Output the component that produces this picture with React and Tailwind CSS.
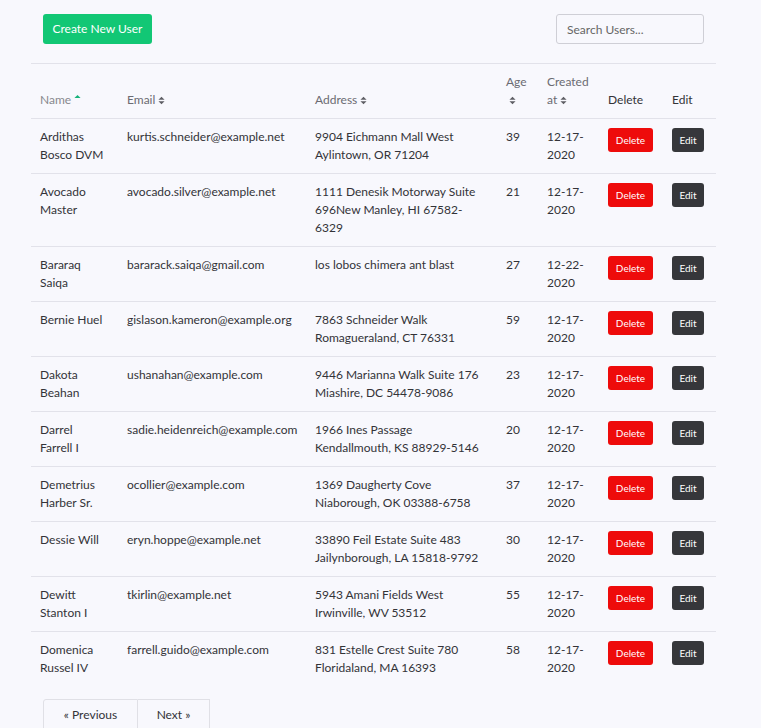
const users = [
  { name: "Ardithas Bosco DVM", email: "kurtis.schneider@example.net", address: "9904 Eichmann Mall West Aylintown, OR 71204", age: 39, created: "12-17-2020" },
  { name: "Avocado Master", email: "avocado.silver@example.net", address: "1111 Denesik Motorway Suite 696New Manley, HI 67582-6329", age: 21, created: "12-17-2020" },
  { name: "Bararaq Saiqa", email: "bararack.saiqa@gmail.com", address: "los lobos chimera ant blast", age: 27, created: "12-22-2020" },
  { name: "Bernie Huel", email: "gislason.kameron@example.org", address: "7863 Schneider Walk Romagueraland, CT 76331", age: 59, created: "12-17-2020" },
  { name: "Dakota Beahan", email: "ushanahan@example.com", address: "9446 Marianna Walk Suite 176 Miashire, DC 54478-9086", age: 23, created: "12-17-2020" },
  { name: "Darrel Farrell I", email: "sadie.heidenreich@example.com", address: "1966 Ines Passage Kendallmouth, KS 88929-5146", age: 20, created: "12-17-2020" },
  { name: "Demetrius Harber Sr.", email: "ocollier@example.com", address: "1369 Daugherty Cove Niaborough, OK 03388-6758", age: 37, created: "12-17-2020" },
  { name: "Dessie Will", email: "eryn.hoppe@example.net", address: "33890 Feil Estate Suite 483 Jailynborough, LA 15818-9792", age: 30, created: "12-17-2020" },
  { name: "Dewitt Stanton I", email: "tkirlin@example.net", address: "5943 Amani Fields West Irwinville, WV 53512", age: 55, created: "12-17-2020" },
  { name: "Domenica Russel IV", email: "farrell.guido@example.com", address: "831 Estelle Crest Suite 780 Floridaland, MA 16393", age: 58, created: "12-17-2020" },
];

function SortIcon({ active = false }) {
  if (active) {
    return (
      <svg viewBox="0 0 8 10" className="ml-[3px] inline-block h-[9px] w-[7px] align-[1px]">
        <path d="M0.5 4.5 L4 1 L7.5 4.5 Z" fill="#16b27a" />
      </svg>
    );
  }
  return (
    <svg viewBox="0 0 8 10" className="ml-[3px] inline-block h-[9px] w-[7px] align-[-1px]">
      <path d="M0.5 4.2 L4 0.8 L7.5 4.2 Z M0.5 5.8 L4 9.2 L7.5 5.8 Z" fill="#5e5e64" />
    </svg>
  );
}

function HeaderCell({ children, sortable = false, active = false, className = "" }) {
  return (
    <th className={`px-[9px] pb-[9px] pt-[9px] text-left align-bottom font-normal ${className}`}>
      {children}
      {sortable && <SortIcon active={active} />}
    </th>
  );
}

function UserRow({ user }) {
  return (
    <tr className="border-t border-[#e2e2ea]">
      <td className="pl-[9px] pr-[12px] py-[9px] align-top">{user.name}</td>
      <td className="px-[9px] py-[9px] align-top">{user.email}</td>
      <td className="px-[9px] py-[9px] align-top">{user.address}</td>
      <td className="px-[9px] py-[9px] align-top">{user.age}</td>
      <td className="px-[9px] py-[9px] align-top">{user.created}</td>
      <td className="px-[9px] py-[9px] align-top">
        <button className="h-[24px] w-[45px] rounded-[3px] bg-[#ee0b0b] text-[10px] text-white">
          Delete
        </button>
      </td>
      <td className="px-[9px] py-[9px] align-top">
        <button className="h-[24px] w-[32px] rounded-[3px] bg-[#36373b] text-[10px] text-white">
          Edit
        </button>
      </td>
    </tr>
  );
}

export default function App() {
  return (
    <div className="min-h-[728px] bg-[#f8f8fd] font-['Lato',sans-serif] text-[12px] leading-[18px] text-[#333338]">
      <div className="ml-[31px] w-[685px]">
        <div className="flex items-start justify-between px-[12px] pb-[19px] pt-[14px]">
          <button className="h-[30px] w-[109px] rounded-[3px] bg-[#12c775] text-[12px] text-white">
            Create New User
          </button>
          <input
            placeholder="Search Users..."
            className="h-[30px] w-[148px] rounded-[3px] border border-[#cfcfd6] bg-[#f8f8fd] px-[10px] text-[12px] text-[#555] placeholder:text-[#666]"
          />
        </div>

        <table className="w-full table-fixed border-collapse border-t border-[#e2e2ea]">
          <colgroup>
            <col className="w-[87px]" />
            <col className="w-[188px]" />
            <col className="w-[191px]" />
            <col className="w-[41px]" />
            <col className="w-[61px]" />
            <col className="w-[64px]" />
            <col className="w-[53px]" />
          </colgroup>
          <thead>
            <tr className="text-[#6b6b72]">
              <HeaderCell sortable active className="text-[#88888e]">Name</HeaderCell>
              <HeaderCell sortable>Email</HeaderCell>
              <HeaderCell sortable>Address</HeaderCell>
              <HeaderCell sortable>Age</HeaderCell>
              <HeaderCell sortable>Created at</HeaderCell>
              <HeaderCell className="text-[#333338]">Delete</HeaderCell>
              <HeaderCell className="text-[#333338]">Edit</HeaderCell>
            </tr>
          </thead>
          <tbody>
            {users.map((user) => (
              <UserRow key={user.email} user={user} />
            ))}
          </tbody>
        </table>

        <div className="mt-[13px] flex px-[12px]">
          <button className="h-[32px] w-[95px] rounded-tl-[3px] border border-[#e0e0e6] bg-[#f8f8fd] text-[12px] text-[#333338]">
            « Previous
          </button>
          <button className="h-[32px] w-[72px] border border-l-0 border-[#e0e0e6] bg-[#f8f8fd] text-[12px] text-[#333338]">
            Next »
          </button>
        </div>
      </div>
    </div>
  );
}
